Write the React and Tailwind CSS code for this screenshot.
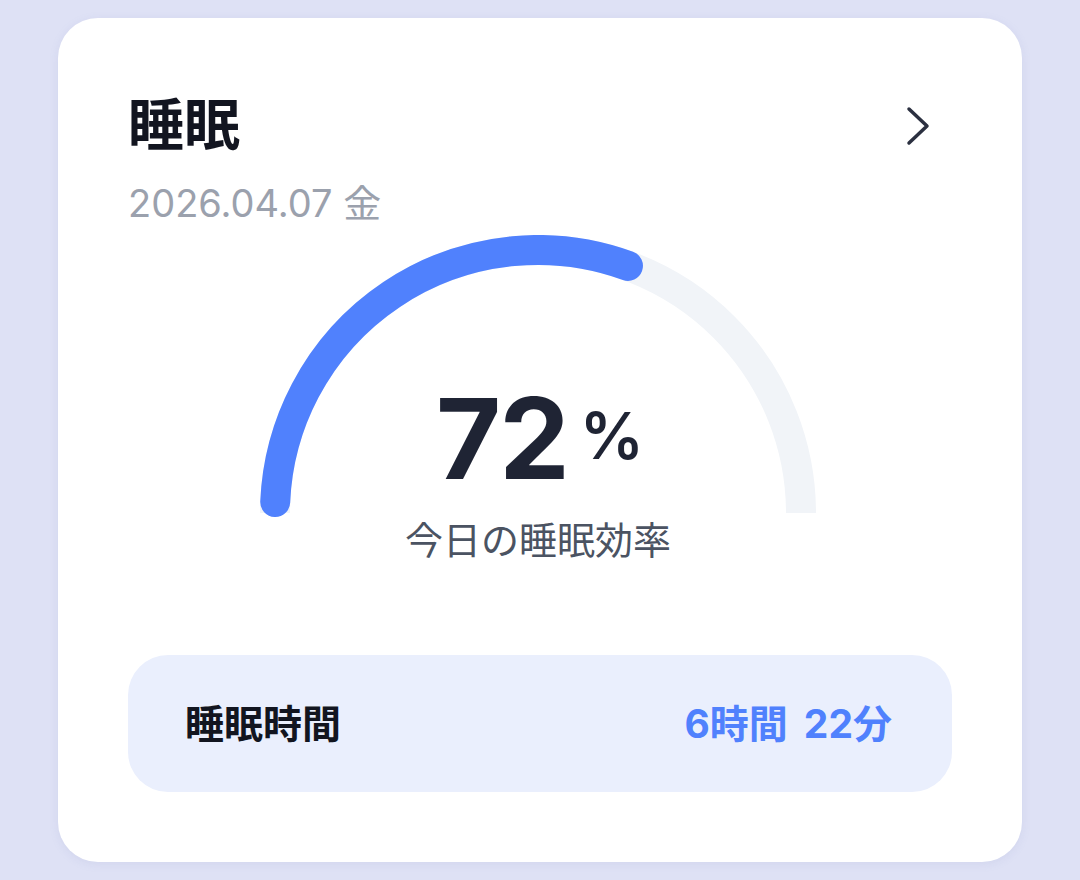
import React from "react";

function Gauge() {
  const cx = 290, cy = 278, r = 263;
  const pt = (deg) => {
    const a = (deg * Math.PI) / 180;
    return [cx + r * Math.cos(a), cy - r * Math.sin(a)];
  };
  const [sx, sy] = pt(177.6);
  const [ex, ey] = pt(70);
  return (
    <svg width="580" height="300" viewBox="0 0 580 300" className="block">
      <path
        d={`M ${cx - r} ${cy} A ${r} ${r} 0 0 1 ${cx + r} ${cy}`}
        fill="none"
        stroke="#f1f4f8"
        strokeWidth="30"
        strokeLinecap="butt"
      />
      <path
        d={`M ${sx} ${sy} A ${r} ${r} 0 0 1 ${ex} ${ey}`}
        fill="none"
        stroke="#5081fd"
        strokeWidth="30"
        strokeLinecap="round"
      />
    </svg>
  );
}

export default function App() {
  return (
    <div
      className="w-[1080px] h-[880px] bg-[#dee1f5] pt-[18px] pl-[58px]"
      style={{ fontFamily: "Inter, 'Noto Sans CJK JP', sans-serif" }}
    >
      <div className="w-[964px] h-[844px] bg-white rounded-[40px] px-[70px] pt-[79px] flex flex-col shadow-[0_2px_10px_rgba(120,130,190,0.12)]">
        <div className="flex items-start justify-between">
          <div className="flex flex-col">
            <div className="text-[56px] leading-none font-bold text-[#121520]">睡眠</div>
            <div className="mt-[31px] text-[38px] leading-none text-[#9ba1ad]">2026.04.07 金</div>
          </div>
          <svg width="24" height="40" viewBox="0 0 24 40" className="mt-[9px] mr-[22px]">
            <path d="M3 3 L21 20 L3 37" fill="none" stroke="#2b3040" strokeWidth="3.5" strokeLinecap="round" strokeLinejoin="round" />
          </svg>
        </div>
        <div className="relative mt-[13px] w-[580px] h-[300px] ml-[120px]">
          <Gauge />
          <div className="absolute left-0 right-0 top-[147px] flex flex-col items-center">
            <div className="flex items-start text-[#1f2434] pl-[4px]">
              <span className="text-[112px] leading-none font-bold tracking-[-2px]">72</span>
              <span className="text-[64px] leading-none font-semibold ml-[12px] mt-[22px]">%</span>
            </div>
            <div className="mt-[27px] text-[38px] leading-none text-[#4b5362]">今日の睡眠効率</div>
          </div>
        </div>
        <div className="mt-[120px] h-[137px] rounded-[40px] bg-[#eaeffd] flex items-center justify-between pl-[57px] pr-[60px]">
          <div className="text-[39px] font-bold text-[#121520] leading-none">睡眠時間</div>
          <div className="text-[39px] font-bold text-[#5081fd] leading-none">6時間<span className="ml-[16px]">22分</span></div>
        </div>
      </div>
    </div>
  );
}
